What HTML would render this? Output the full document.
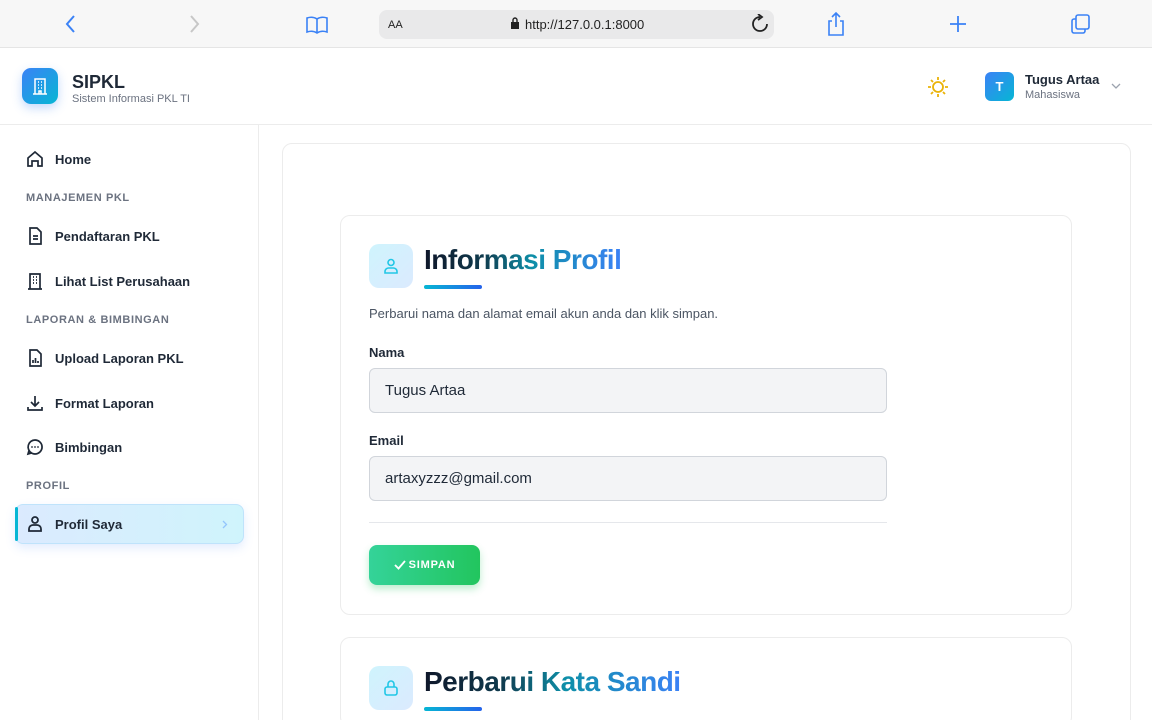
<!DOCTYPE html>
<html style="width:1152px;height:720px;overflow:hidden"><head><meta charset="utf-8"><style>
*{box-sizing:border-box;margin:0;padding:0}
body{width:1152px;height:720px;overflow:hidden;font-family:"Liberation Sans",sans-serif;background:#fff;position:relative;color:#111827}
.abs{position:absolute}
.bar{left:0;top:0;width:1152px;height:48px;background:#f7f7f7;border-bottom:1px solid #e5e5e5}
.url{left:379px;top:10px;width:395px;height:29px;background:#e9e9ea;border-radius:8px}
.hdr{left:0;top:48px;width:1152px;height:77px;background:#fff;border-bottom:1px solid #ececec}
.side{left:0;top:125px;width:259px;height:595px;border-right:1px solid #ececec;background:#fff}
.nav{position:absolute;left:26px;font-size:13px;font-weight:bold;color:#1f2937;display:flex;align-items:center}
.nav svg{width:18px;height:18px;margin-right:11px}
.sec{position:absolute;left:26px;font-size:11px;font-weight:bold;color:#6b7280;letter-spacing:.6px}
.card{border:1px solid #ececec;border-radius:10px;background:#fff}
.title{font-size:28px;font-weight:bold;letter-spacing:-.5px;background:linear-gradient(90deg,#0f172a 0%,#0f3a4d 30%,#0e8fa8 55%,#3b82f6 100%);-webkit-background-clip:text;background-clip:text;color:transparent}
.ic{width:44px;height:44px;border-radius:10px;background:linear-gradient(135deg,#cff4fd,#dbeafe);display:flex;align-items:center;justify-content:center}
.ul{width:58px;height:4px;border-radius:2px;background:linear-gradient(90deg,#06b6d4,#2563eb)}
.lbl{font-size:13px;font-weight:bold;color:#1f2937}
.inp{width:518px;height:45px;background:#f3f4f6;border:1px solid #d1d5db;border-radius:6px;font-size:15px;color:#1f2937;padding:13px 15px}
</style></head><body>
<div class="abs bar"></div>
<svg class="abs" style="left:64px;top:14px" width="14" height="20" viewBox="0 0 14 20"><path d="M10 2 3 10l7 8" stroke="#3b82f6" stroke-width="2" fill="none"/></svg>
<svg class="abs" style="left:187px;top:14px" width="14" height="20" viewBox="0 0 14 20"><path d="M4 2l7 8-7 8" stroke="#c7c7c7" stroke-width="2" fill="none"/></svg>
<svg class="abs" style="left:305px;top:15px" width="24" height="20" viewBox="0 0 24 20"><path d="M12 4C9 2 5 2 2 3v14c3-1 7-1 10 1 3-2 7-2 10-1V3c-3-1-7-1-10 1zM12 4v14" stroke="#3b82f6" stroke-width="1.6" fill="none"/></svg>
<div class="abs url"></div>
<div class="abs" style="left:388px;top:19px;font-size:11px;color:#222">AA</div>
<svg class="abs" style="left:510px;top:17px" width="10" height="13"><rect x="1" y="5" width="8" height="7" fill="#222"/><path d="M3 5V3a2 2 0 0 1 4 0v2" stroke="#222" stroke-width="1.4" fill="none"/></svg>
<div class="abs" style="left:525px;top:17px;font-size:13px;color:#222">http://127.0.0.1:8000</div>
<svg class="abs" style="left:751px;top:14px" width="18" height="20" viewBox="0 0 18 20"><path d="M9 3a7 7 0 1 0 7 7" stroke="#222" stroke-width="1.8" fill="none"/><path d="M7 0l4 3-4 3" stroke="#222" stroke-width="1.8" fill="none"/></svg>
<svg class="abs" style="left:826px;top:11px" width="20" height="26" viewBox="0 0 20 26"><path d="M10 2v14M6 6l4-4 4 4M6 10H3v14h14V10h-3" stroke="#3b82f6" stroke-width="1.6" fill="none"/></svg>
<svg class="abs" style="left:949px;top:15px" width="18" height="18"><path d="M9 1v16M1 9h16" stroke="#3b82f6" stroke-width="1.8"/></svg>
<svg class="abs" style="left:1070px;top:13px" width="22" height="22"><rect x="2" y="6" width="13" height="14" rx="2" stroke="#3b82f6" stroke-width="1.6" fill="none"/><rect x="6" y="2" width="13" height="14" rx="2" stroke="#3b82f6" stroke-width="1.6" fill="#f7f7f7"/></svg>

<div class="abs hdr"></div>
<div class="abs" style="left:22px;top:68px;width:36px;height:36px;border-radius:9px;background:linear-gradient(135deg,#3b82f6,#06b6d4);box-shadow:0 4px 10px rgba(59,130,246,.3)"></div>
<svg class="abs" style="left:30px;top:76px" width="20" height="20" viewBox="0 0 20 20"><path d="M5 18V3h10v15M3 18h14M8 6h1M11 6h1M8 9h1M11 9h1M8 12h1M11 12h1M9 18v-3h2v3" stroke="#fff" stroke-width="1.5" fill="none"/></svg>
<div class="abs" style="left:72px;top:72px;font-size:18px;font-weight:bold;color:#1f2937">SIPKL</div>
<div class="abs" style="left:72px;top:93px;font-size:11px;color:#6b7280">Sistem Informasi PKL TI</div>
<svg class="abs" style="left:927px;top:76px" width="22" height="22" viewBox="0 0 22 22"><circle cx="11" cy="11" r="5" stroke="#eab308" stroke-width="1.8" fill="none"/><path d="M11 1v3M11 18v3M1 11h3M18 11h3M4 4l2 2M16 16l2 2M4 18l2-2M16 6l2-2" stroke="#eab308" stroke-width="1.8"/></svg>
<div class="abs" style="left:985px;top:72px;width:29px;height:29px;border-radius:6px;background:linear-gradient(135deg,#3b82f6,#06b6d4);color:#fff;font-size:13px;font-weight:bold;text-align:center;line-height:29px">T</div>
<div class="abs" style="left:1025px;top:72px;font-size:13px;font-weight:bold;color:#1f2937">Tugus Artaa</div>
<div class="abs" style="left:1025px;top:89px;font-size:11px;color:#6b7280">Mahasiswa</div>
<svg class="abs" style="left:1111px;top:83px" width="10" height="7"><path d="M1 1l4 4 4-4" stroke="#9ca3af" stroke-width="1.3" fill="none"/></svg>

<div class="abs side"></div>
<div class="nav" style="top:150px"><svg viewBox="0 0 18 18"><path d="M2 8l7-6 7 6v8h-4v-5H6v5H2z" stroke="#1f2937" stroke-width="1.7" fill="none"/></svg>Home</div>
<div class="sec" style="top:192px">MANAJEMEN PKL</div>
<div class="nav" style="top:227px"><svg viewBox="0 0 18 18"><path d="M4 1h7l4 4v12H4zM7 9h5M7 12h5" stroke="#1f2937" stroke-width="1.7" fill="none"/></svg>Pendaftaran PKL</div>
<div class="nav" style="top:272px"><svg viewBox="0 0 18 18"><path d="M4 17V2h10v15M2 17h14M7 5h1M10 5h1M7 8h1M10 8h1M7 11h1M10 11h1" stroke="#1f2937" stroke-width="1.7" fill="none"/></svg>Lihat List Perusahaan</div>
<div class="sec" style="top:314px">LAPORAN &amp; BIMBINGAN</div>
<div class="nav" style="top:349px"><svg viewBox="0 0 18 18"><path d="M4 1h7l4 4v12H4zM7 14v-3M9.5 14V9M12 14v-2" stroke="#1f2937" stroke-width="1.7" fill="none"/></svg>Upload Laporan PKL</div>
<div class="nav" style="top:394px"><svg viewBox="0 0 18 18"><path d="M9 2v10M5 8l4 4 4-4M2 13v3h14v-3" stroke="#1f2937" stroke-width="1.7" fill="none"/></svg>Format Laporan</div>
<div class="nav" style="top:438px"><svg viewBox="0 0 18 18"><path d="M9 2a7 7 0 1 1-6 10.5L2 16l3.5-1A7 7 0 0 1 9 2z" stroke="#1f2937" stroke-width="1.7" fill="none"/><circle cx="6" cy="9" r=".9" fill="#1f2937"/><circle cx="9" cy="9" r=".9" fill="#1f2937"/><circle cx="12" cy="9" r=".9" fill="#1f2937"/></svg>Bimbingan</div>
<div class="sec" style="top:480px">PROFIL</div>
<div class="abs" style="left:15px;top:504px;width:229px;height:40px;border-radius:8px;background:linear-gradient(90deg,#dbeafe,#cff4fc);border:1px solid #bfe3fb;box-shadow:0 4px 10px rgba(59,130,246,.15)"></div>
<div class="abs" style="left:15px;top:507px;width:3px;height:34px;border-radius:2px;background:#06b6d4"></div>
<div class="nav" style="top:515px"><svg viewBox="0 0 18 18"><circle cx="9" cy="5" r="3" stroke="#1f2937" stroke-width="1.8" fill="none"/><path d="M3 16v-2a4 4 0 0 1 4-4h4a4 4 0 0 1 4 4v2z" stroke="#1f2937" stroke-width="1.8" fill="none"/></svg>Profil Saya</div>
<svg class="abs" style="left:222px;top:520px" width="6" height="9"><path d="M1 1l3.5 3.5L1 8" stroke="#93c5fd" stroke-width="1.3" fill="none"/></svg>

<div class="abs card" style="left:282px;top:143px;width:849px;height:590px"></div>
<div class="abs card" style="left:340px;top:215px;width:732px;height:400px"></div>
<div class="abs ic" style="left:369px;top:244px"><svg width="20" height="20" viewBox="0 0 20 20"><circle cx="10" cy="6.5" r="3" stroke="#22c7e6" stroke-width="1.6" fill="none"/><path d="M4 17v-1.5a3.5 3.5 0 0 1 3.5-3.5h5a3.5 3.5 0 0 1 3.5 3.5V17z" stroke="#22c7e6" stroke-width="1.6" fill="none"/></svg></div>
<div class="abs title" style="left:424px;top:244px">Informasi Profil</div>
<div class="abs ul" style="left:424px;top:285px"></div>
<div class="abs" style="left:369px;top:306px;font-size:13px;color:#4b5563">Perbarui nama dan alamat email akun anda dan klik simpan.</div>
<div class="abs lbl" style="left:369px;top:345px">Nama</div>
<div class="abs inp" style="left:369px;top:368px">Tugus Artaa</div>
<div class="abs lbl" style="left:369px;top:433px">Email</div>
<div class="abs inp" style="left:369px;top:456px">artaxyzzz@gmail.com</div>
<div class="abs" style="left:369px;top:522px;width:518px;height:1px;background:#e5e7eb"></div>
<div class="abs" style="left:369px;top:545px;width:111px;height:40px;border-radius:8px;background:linear-gradient(90deg,#34d399,#22c55e);box-shadow:0 4px 8px rgba(34,197,94,.3);color:#fff;font-size:11px;font-weight:bold;letter-spacing:.8px;display:flex;align-items:center;justify-content:center"><svg width="12" height="10" style="margin-right:3px"><path d="M1 5l3.5 3.5L11 1" stroke="#fff" stroke-width="1.8" fill="none"/></svg>SIMPAN</div>

<div class="abs card" style="left:340px;top:637px;width:732px;height:90px"></div>
<div class="abs ic" style="left:369px;top:666px"><svg width="20" height="20" viewBox="0 0 20 20"><rect x="4" y="9" width="12" height="8" rx="2" stroke="#22c7e6" stroke-width="1.6" fill="none"/><path d="M7 9V6a3 3 0 0 1 6 0v3" stroke="#22c7e6" stroke-width="1.6" fill="none"/></svg></div>
<div class="abs title" style="left:424px;top:666px">Perbarui Kata Sandi</div>
<div class="abs ul" style="left:424px;top:707px"></div>
</body></html>
